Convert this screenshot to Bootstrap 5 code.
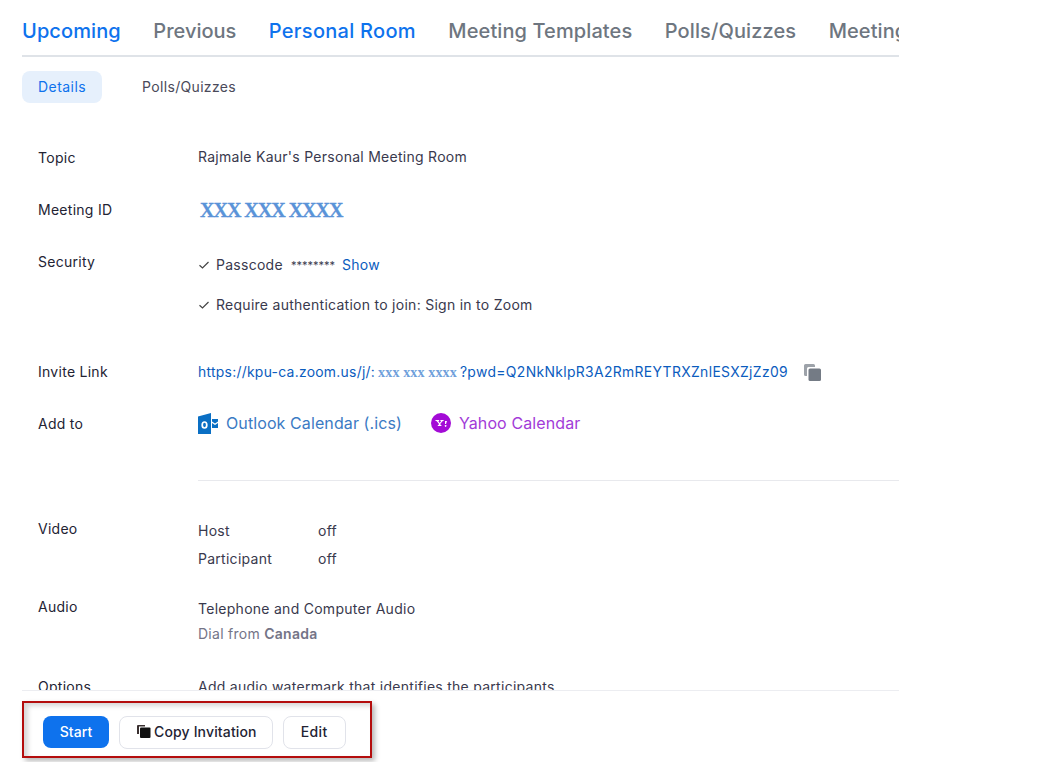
<!DOCTYPE html>
<html lang="en"><head><meta charset="utf-8"><title>Personal Room</title>
<link rel="stylesheet" href="https://cdn.jsdelivr.net/npm/bootstrap@5.3.0/dist/css/bootstrap.min.css">
<style>
html,body{height:762px;overflow:hidden}
body{font-family:Inter,"Liberation Sans",sans-serif;color:#232333;background:#fff;font-size:14px;line-height:20px;letter-spacing:.27px}
.shell{width:877px;margin-left:22px}
.tabbar{height:57px;border-bottom:2px solid #dfe3e8;overflow:hidden;gap:32.5px;flex-wrap:nowrap;white-space:nowrap}
.tabbar a{font-size:20px;line-height:24px;padding:19px 0 12px;height:57px;color:#6e7680;text-decoration:none;font-weight:500;flex:none;letter-spacing:.1px}
.tabbar a.blue{color:#0e72ed}
.tabbar a.tight{letter-spacing:0}
.tabbar a.on{border-bottom:2px solid #0e72ed;letter-spacing:.28px}
.subtabs{margin-top:14px;gap:24px}
.subtabs a{height:32px;padding:6px 16px;border-radius:8px;color:#4a4a5a;text-decoration:none;font-size:14px;letter-spacing:.32px}
.subtabs a.on{background:#e6f0fc;color:#0e72ed;letter-spacing:.45px}
.scroller{height:588px;overflow:hidden;border-bottom:1px solid #ecedf1}
.info-row{display:flex;padding-left:16px}
.info-label{width:160px;flex:none;color:#232333}
.info-value{color:#39394d}
.v1{margin-top:45px}
.v2{margin-top:32px}
.v3{margin-top:32px}
.v4{margin-top:47px}
.v5{margin-top:31px}
.v6{margin-top:38px}
.v7{margin-top:28px}
.v8{margin-top:33px}
.nudge-up{margin-top:-1px}
.nudge-down{margin-top:2px}
.nudge-more{margin-top:3px}
.cal-row{margin-top:-1px;height:20px}
.mid-text{font-family:"Liberation Serif",serif;font-weight:700;font-size:20px;color:#5a93d8;letter-spacing:-1px;line-height:20px;margin-left:2px;-webkit-text-stroke:.3px #5a93d8}
.sec-line{display:flex;align-items:center;gap:6px}
.sec-line+.sec-line{margin-top:20px}
.sec-link{color:#0b5cbe;text-decoration:none}
.stars{margin:0 1px 0 2px;letter-spacing:0;font-size:11px}
.invite{color:#0b5cbe;text-decoration:none;font-size:13.9px}
.masked{font-family:"Liberation Serif",serif;font-weight:700;font-size:14px;letter-spacing:.15px;color:#6f9fdb;margin:0 3px 0 3px}
.pwd-part{letter-spacing:.35px}
.cal-link{font-size:16px;text-decoration:none;display:inline-flex;align-items:center;gap:8px;letter-spacing:.1px}
.cal-out{color:#3b7ac4}
.cal-yah{color:#a23bd8;margin-left:29px}
.sep{border-top:1px solid #e8e9ed;margin:46px 0 0 176px;width:auto}
.pair{display:flex}
.pair span:first-child{width:120px}
.pair+.pair{margin-top:8px}
.muted-line{color:#747487;margin-top:5px}
.muted-line b{font-weight:600}
.actionbox{width:350px;height:57px;margin-top:10px;border:2px solid #b40d0d;box-shadow:3px 3px 5px rgba(0,0,0,.28),inset 4px 3px 5px rgba(0,0,0,.16);padding:5px 0 0 19px;gap:10px}
.btn-start{background:#0e72ed;color:#fff;border:0;border-radius:8px;width:66px;height:32px;font-size:14px;font-weight:500;padding:0;letter-spacing:.1px}
.btn-plain{background:#fff;color:#232333;border:1px solid #e1e3ea;border-radius:8px;height:33px;font-size:14px;font-weight:500;padding:0 15px 0 16px;display:inline-flex;align-items:center;gap:2px;letter-spacing:.15px}
.btn-plain.edit-btn{padding:0 17px;letter-spacing:.35px}
</style></head>
<body>
<div class="shell">
  <nav class="nav tabbar">
    <a class="blue" href="#">Upcoming</a>
    <a class="tight" href="#">Previous</a>
    <a class="blue on" href="#">Personal Room</a>
    <a href="#">Meeting Templates</a>
    <a href="#">Polls/Quizzes</a>
    <a href="#">Meeting Settings</a>
  </nav>
  <div class="d-flex subtabs">
    <a class="on" href="#">Details</a>
    <a href="#">Polls/Quizzes</a>
  </div>
  <div class="scroller">
    <div class="info-row v1"><div class="info-label">Topic</div><div class="nudge-up info-value">Rajmale Kaur's Personal Meeting Room</div></div>
    <div class="info-row v2"><div class="info-label">Meeting ID</div><div class="mid-text">XXX XXX XXXX</div></div>
    <div class="info-row v3"><div class="info-label">Security</div>
      <div class="nudge-more info-value">
        <div class="sec-line"><svg width="12" height="12" viewBox="0 0 12 12" fill="none" stroke="#444" stroke-width="1.2"><path d="M1.5 6.2 4.5 9 10.500 3"/></svg><span>Passcode</span><span class="stars">********</span><a class="sec-link" href="#">Show</a></div>
        <div class="sec-line"><svg width="12" height="12" viewBox="0 0 12 12" fill="none" stroke="#444" stroke-width="1.2"><path d="M1.5 6.2 4.5 9 10.500 3"/></svg><span>Require authentication to join: Sign in to Zoom</span></div>
      </div>
    </div>
    <div class="info-row v4"><div class="info-label">Invite Link</div>
      <div class="d-flex align-items-center"><a class="invite" href="#">https://kpu-ca.zoom.us/j/:<span class="masked">xxx xxx xxxx</span><span class="pwd-part">?pwd=Q2NkNklpR3A2RmREYTRXZnlESXZjZz09</span></a>
      <svg class="ms-3" width="17" height="17" viewBox="0 0 17 17" fill="#747b85"><path d="M0 1.500A1.500 1.500 0 0 1 1.500 0h8A1.500 1.500 0 0 1 11 1.500V3H4.500A1.500 1.500 0 0 0 3 4.500V12H1.500A1.500 1.500 0 0 1 0 10.500z" opacity=".7"/><rect x="4.500" y="4.500" width="12.500" height="12.500" rx="1.500"/></svg></div>
    </div>
    <div class="info-row v5"><div class="info-label">Add to</div>
      <div class="d-flex cal-row">
        <a class="cal-link cal-out" href="#"><svg width="20" height="21" viewBox="0 0 20 21"><path fill="#0a6fc4" d="M0 3.500 13 0V21H0z"/><path fill="#0a6fc4" d="M14 6h6v2.500l-3 2-3-2zM14 10l3 2 3-2v5h-6z"/><ellipse cx="6.500" cy="12" rx="2.300" ry="3" fill="none" stroke="#fff" stroke-width="1.700"/></svg>Outlook Calendar (.ics)</a>
        <a class="cal-link cal-yah" href="#"><svg width="20" height="20" viewBox="0 0 20 20"><circle cx="10" cy="10" r="10" fill="#a30bd6"/><path fill="#fff" d="M4.500 7h3.600v.9h-.8l1.400 2 1.500-2h-.8V7h3.200v.9h-.8l-2.300 2.700v1.500h.9v.9H6.800v-.9h.9v-1.500L5.400 7.900h-.9z"/><path fill="#fff" d="M14 8h2l-1 3h-1zM14.600 12a.9.900 0 1 0 .02 0z"/></svg>Yahoo Calendar</a>
      </div>
    </div>
    <div class="sep"></div>
    <div class="info-row v6"><div class="info-label">Video</div>
      <div class="nudge-down info-value"><div class="pair"><span>Host</span><span>off</span></div><div class="pair"><span>Participant</span><span>off</span></div></div>
    </div>
    <div class="info-row v7"><div class="info-label">Audio</div>
      <div class="nudge-down info-value"><div>Telephone and Computer Audio</div><div class="muted-line">Dial from <b>Canada</b></div></div>
    </div>
    <div class="info-row v8"><div class="info-label">Options</div><div class="info-value">Add audio watermark that identifies the participants</div></div>
  </div>
  <div class="d-flex align-items-center actionbox">
    <button class="btn-start" type="button">Start</button>
    <button class="btn-plain" type="button"><svg width="16" height="16" viewBox="0 0 16 16"><path d="M1 2A1 1 0 0 1 2 1h7v1.500H3V10H1z" fill="#3a3030"/><rect x="4" y="3.500" width="10.500" height="10.500" rx="1" fill="#111"/></svg>Copy Invitation</button>
    <button class="btn-plain edit-btn" type="button">Edit</button>
  </div>
</div>
<script src="https://cdn.jsdelivr.net/npm/bootstrap@5.3.0/dist/js/bootstrap.bundle.min.js"></script>
</body></html>
